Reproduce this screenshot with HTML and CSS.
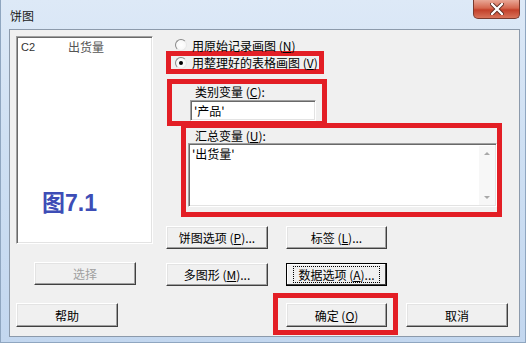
FILE: index.html
```html
<!DOCTYPE html>
<html>
<head>
    <meta charset="UTF-8">
    <title>饼图</title>
    <link rel="stylesheet" href="styles.css">
</head>
<body>
    <div class="window">
        <div class="titlebar">
            <span class="title">饼图</span>
            <span class="close">
                <svg width="14" height="12" viewBox="0 0 14 12">
                    <path d="M2 1 L12 11 M12 1 L2 11" stroke="#5a2a20" stroke-width="4" stroke-linecap="round"/>
                    <path d="M2 1 L12 11 M12 1 L2 11" stroke="#fff" stroke-width="2.4" stroke-linecap="round"/>
                </svg>
            </span>
        </div>
        <div class="client">
            <div class="main">
                <div class="left">
                    <div class="listbox">
                        <div class="list-row"><span class="col-id">C2</span><span>出货量</span></div>
                        <div class="fig-label">图7.1</div>
                    </div>
                    <button class="btn btn-select" disabled>选择</button>
                </div>
                <div class="right">
                    <div class="radio radio-first"><span class="radio-dot"></span>用原始记录画图 (<u>N</u>)</div>
                    <div class="mark mark-radio">
                        <div class="radio"><span class="radio-dot checked"></span>用整理好的表格画图 (<u>V</u>)</div>
                    </div>
                    <div class="mark mark-cat">
                        <div class="field-label">类别变量 (<u>C</u>):</div>
                        <div class="input">'产品'</div>
                    </div>
                    <div class="mark mark-sum">
                        <div class="field-label">汇总变量 (<u>U</u>):</div>
                        <div class="textarea">
                            <div class="ta-text">'出货量'</div>
                            <div class="scrollbar">
                                <span class="arrow up"></span>
                                <span class="arrow down"></span>
                            </div>
                        </div>
                    </div>
                    <div class="btn-row">
                        <button class="btn">饼图选项 (<u>P</u>)...</button>
                        <button class="btn btn-narrow">标签 (<u>L</u>)...</button>
                    </div>
                    <div class="btn-row row-second">
                        <button class="btn">多图形 (<u>M</u>)...</button>
                        <button class="btn btn-narrow btn-focus"><span class="focus-ring">数据选项 (<u>A</u>)...</span></button>
                    </div>
                </div>
            </div>
            <div class="bottom">
                <button class="btn btn-help">帮助</button>
                <div class="mark mark-ok">
                    <button class="btn btn-narrow btn-ok">确定 (<u>O</u>)</button>
                </div>
                <button class="btn btn-cancel">取消</button>
            </div>
        </div>
    </div>
</body>
</html>
```

FILE: styles.css
```css
body {
    margin: 0;
    font-family: "Noto Sans CJK SC", "Noto Sans", sans-serif;
    font-size: 12px;
    color: #000;
}
.window {
    width: 526px;
    height: 343px;
    background: linear-gradient(180deg, #dde9f7 0%, #cfe0f3 40%, #c3d7ef 100%);
    box-shadow: inset 1px 0 0 #8fa6c0, inset -1px 0 0 #8fa6c0, inset 0 -1px 0 #8fa6c0;
}
.titlebar {
    height: 29px;
    display: flex;
    align-items: flex-start;
}
.title {
    padding: 9px 0 0 10px;
    line-height: 14px;
    color: #1a1a1a;
}
.close {
    margin-left: auto;
    margin-right: 6px;
    width: 47px;
    height: 19px;
    box-sizing: border-box;
    border: 1px solid #7a3a2e;
    border-top: none;
    border-radius: 0 0 5px 5px;
    background: linear-gradient(180deg, #e9a796 0%, #d5674f 45%, #c3402a 55%, #d8735a 100%);
    display: flex;
    align-items: center;
    justify-content: center;
}
.client {
    margin-left: 9px;
    width: 511px;
    height: 308px;
    box-sizing: border-box;
    border: 1px solid #8c9aab;
    background-color: #f0f0f0;
}
.main {
    display: flex;
    height: 255px;
}
.left {
    width: 156px;
}
.listbox {
    margin: 6px 0 0 6px;
    width: 137px;
    height: 208px;
    box-sizing: border-box;
    border: 1px solid;
    border-color: #a0a0a0 #fff #fff #a0a0a0;
    box-shadow: inset 1px 1px 0 #696969, inset -1px -1px 0 #e3e3e3;
    background-color: white;
    padding: 3px 0 0 4px;
}
.list-row {
    display: flex;
    line-height: 14px;
}
.col-id {
    width: 47px;
    font-family: "Liberation Sans", sans-serif;
    font-size: 11px;
    color: #333;
}
.list-row span:last-child {
    color: #555;
}
.fig-label {
    margin: 136px 0 0 21px;
    font-size: 23px;
    line-height: 26px;
    font-weight: bold;
    color: #3d4db6;
    font-family: "Liberation Sans", "Noto Sans CJK SC", sans-serif;
}
.btn {
    display: flex;
    align-items: center;
    justify-content: center;
    width: 102px;
    height: 23px;
    padding: 0;
    box-sizing: border-box;
    font: inherit;
    color: #000;
    background-color: #f0f0f0;
    border: 1px solid;
    border-color: #fff #404040 #404040 #fff;
    box-shadow: inset -1px -1px 0 #a0a0a0, inset 1px 1px 0 #e3e3e3;
}
.btn-narrow {
    width: 101px;
}
.btn-select {
    margin: 18px 0 0 24px;
    color: #a0a0a0;
}
.btn-focus {
    border-color: #000;
    box-shadow: inset -1px -1px 0 #404040, inset 1px 1px 0 #fff;
}
.focus-ring {
    border: 1px dotted #000;
    padding: 0 4px;
    line-height: 15px;
}
.right {
    flex: 1;
}
.radio {
    display: flex;
    align-items: center;
    line-height: 13px;
}
.radio-first {
    margin-top: 9px;
    padding-left: 9px;
    height: 12px;
}
.radio-dot {
    width: 12px;
    height: 12px;
    box-sizing: border-box;
    border-radius: 50%;
    border: 1px solid;
    border-color: #8a8a8a #e8e8e8 #e8e8e8 #8a8a8a;
    background: radial-gradient(circle, #fff 0%, #f4f4f4 100%);
    margin-right: 5px;
    display: flex;
    align-items: center;
    justify-content: center;
}
.radio-dot.checked::after {
    content: "";
    width: 4px;
    height: 4px;
    border-radius: 50%;
    background-color: #000;
}
.mark {
    border: 5px solid #e31e25;
    box-sizing: border-box;
}
.mark-radio {
    width: 158px;
    height: 23px;
    padding: 0 0 0 4px;
    display: flex;
    align-items: center;
}
.mark-cat {
    margin: 5px 0 0 1px;
    width: 160px;
    height: 47px;
}
.mark-cat .field-label {
    padding-left: 23px;
}
.field-label {
    line-height: 14px;
    margin-top: 1px;
}
.input {
    margin: 1px 0 0 18px;
    width: 126px;
    height: 21px;
    box-sizing: border-box;
    border: 1px solid;
    border-color: #a0a0a0 #fff #fff #a0a0a0;
    box-shadow: inset 1px 1px 0 #696969, inset -1px -1px 0 #e3e3e3;
    background-color: white;
    padding: 2px 3px;
    line-height: 15px;
}
.mark-sum {
    position: relative;
    margin: -3px 0 0 15px;
    width: 321px;
    height: 94px;
}
.mark-sum .field-label {
    padding-left: 9px;
}
.textarea {
    display: flex;
    margin-left: 2px;
    height: 64px;
    box-sizing: border-box;
    border: 1px solid;
    border-color: #a0a0a0 #fff #fff #a0a0a0;
    box-shadow: inset 1px 1px 0 #696969, inset -1px -1px 0 #e3e3e3;
    background-color: white;
}
.ta-text {
    flex: 1;
    padding: 3px 3px;
    line-height: 14px;
}
.scrollbar {
    width: 16px;
    margin: 2px 1px 1px 0;
    background-color: #f7f7f7;
    display: flex;
    flex-direction: column;
    justify-content: space-between;
    align-items: center;
    padding: 6px 0 6px;
    box-sizing: border-box;
}
.arrow {
    width: 0;
    height: 0;
    border-left: 3px solid transparent;
    border-right: 3px solid transparent;
}
.arrow.up {
    border-bottom: 3px solid #a8a8a8;
}
.arrow.down {
    border-top: 3px solid #a8a8a8;
}
.btn-row {
    display: flex;
    gap: 18px;
    margin-top: 9px;
}
.row-second {
    margin-top: 14px;
}
.bottom {
    display: flex;
    align-items: flex-start;
    margin-top: 8px;
}
.btn-help {
    margin: 10px 0 0 6px;
    height: 24px;
}
.mark-ok {
    margin-left: 155px;
    width: 125px;
    height: 42px;
    padding: 5px 0 0 8px;
}
.btn-ok {
    height: 24px;
}
.btn-cancel {
    margin: 10px 0 0 8px;
    height: 24px;
}
```
